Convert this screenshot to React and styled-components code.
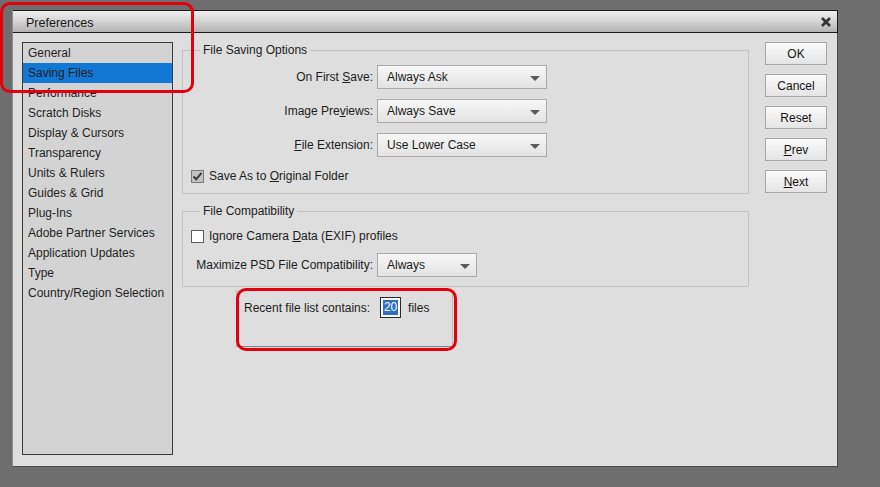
import React from 'react';
import styled, { createGlobalStyle } from 'styled-components';

const GlobalStyle = createGlobalStyle`
  html, body {
    margin: 0;
    padding: 0;
    background: #6e6e6e;
  }
  body {
    font-family: "Liberation Sans", Arial, sans-serif;
    font-size: 12px;
    color: #1c1c1c;
  }
  * { box-sizing: border-box; }
`;

const Screen = styled.div`
  position: relative;
  width: 880px;
  height: 487px;
  padding: 10px 0 0 12px;
  overflow: hidden;
`;

const Dialog = styled.div`
  width: 826px;
  height: 457px;
  display: flex;
  flex-direction: column;
  background: #dedede;
  border-left: 1px solid #8c8c8c;
  border-right: 1px solid #4a4a4a;
  border-bottom: 1px solid #4a4a4a;
`;

const TitleBar = styled.div`
  height: 23px;
  display: flex;
  align-items: center;
  justify-content: space-between;
  padding: 2px 5px 0 13px;
  border-top: 1px solid #1a1a1a;
  border-bottom: 1px solid #1a1a1a;
  margin-right: -1px;
  border-right: 1px solid #1a1a1a;
  background: linear-gradient(#eeeeee, #d6d6d6 45%, #b2b2b2);
  font-size: 12.5px;
  color: #161616;
`;

const CloseButton = styled.span`
  display: flex;
  width: 12px;
  height: 12px;
  margin-top: -2px;
  color: #333;
`;

const Body = styled.div`
  flex: 1;
  display: flex;
  padding: 10px 10px 9px 9px;
`;

const Sidebar = styled.ul`
  list-style: none;
  margin: -1px 0 0 0;
  padding: 0;
  width: 151px;
  height: 413px;
  border: 1px solid #3a3a3a;
  background: #d3d3d3;
`;

const SidebarItem = styled.li`
  height: 20px;
  line-height: 21px;
  padding-left: 5px;
  white-space: nowrap;
  color: #1f1f1f;
  background: ${(p) => (p.$active ? '#1378d4' : 'transparent')};
`;

const Content = styled.div`
  width: 567px;
  margin-left: 9px;
  display: flex;
  flex-direction: column;
`;

const Group = styled.fieldset`
  margin: ${(p) => p.$top || 0}px 0 0 0;
  padding: 0;
  border: 1px solid #c2c2c2;
  min-width: 0;
`;

const Legend = styled.legend`
  margin-left: 17px;
  padding: 0 3px;
  line-height: 14px;
  color: #1c1c1c;
`;

const GroupBody = styled.div`
  display: flex;
  flex-direction: column;
  gap: 10px;
  padding: ${(p) => p.$pad};
`;

const FieldRow = styled.div`
  display: flex;
  align-items: center;
  height: 24px;
`;

const FieldLabel = styled.label`
  width: 194px;
  text-align: right;
  padding-right: 4px;
  white-space: nowrap;
`;

const Select = styled.div`
  position: relative;
  width: ${(p) => p.$width}px;
  height: 24px;
  display: flex;
  align-items: center;
  padding-left: 9px;
  border: 1px solid #a9a9a9;
  background: linear-gradient(#f7f7f7, #e3e3e3);
  color: #1a1a1a;

  &::after {
    content: '';
    position: absolute;
    right: 6px;
    top: 10px;
    border-left: 5px solid transparent;
    border-right: 5px solid transparent;
    border-top: 5px solid #5a5a5a;
  }
`;

const CheckRow = styled.label`
  display: flex;
  align-items: center;
  height: 14px;
  gap: 5px;
  padding-left: 8px;
  margin-top: ${(p) => p.$top || 0}px;
`;

const Box = styled.span`
  display: flex;
  width: 13px;
  height: 13px;
  border: 1px solid ${(p) => (p.$checked ? '#7a7a7a' : '#5c5c5c')};
  background: ${(p) => (p.$checked ? '#c3c3c3' : '#ffffff')};
  color: #3a3a3a;
`;

const RecentBox = styled.div`
  margin: 3px 0 0 54px;
  width: 217px;
  height: 57px;
  padding: 6px 7px;
  border: 1px solid #bdbdbd;
  border-bottom-color: #858585;
`;

const RecentRow = styled.div`
  display: flex;
  align-items: center;
  height: 21px;
`;

const CountInput = styled.span`
  width: 21px;
  height: 21px;
  margin: 0 7px 0 10px;
  padding: 2px;
  border: 1px solid #2a2a2a;
  background: #fff;
  display: flex;
`;

const Selected = styled.span`
  flex: 1;
  background: #2c6fc5;
  color: #fff;
  line-height: 15px;
  text-align: center;
`;

const Buttons = styled.div`
  width: 62px;
  margin: -1px 0 0 16px;
  display: flex;
  flex-direction: column;
  gap: 9px;
`;

const Button = styled.button`
  height: 23px;
  padding: 0;
  border: 1px solid #a6a6a6;
  border-radius: 0;
  background: linear-gradient(#fbfbfb, #e4e4e4);
  font-family: inherit;
  font-size: 12px;
  color: #141414;
`;

const Callout = styled.div`
  position: absolute;
  left: ${(p) => p.$x}px;
  top: ${(p) => p.$y}px;
  width: ${(p) => p.$w}px;
  height: ${(p) => p.$h}px;
  border: 3px solid #e3000d;
  border-radius: 10px;
  pointer-events: none;
`;

const sections = [
  'General',
  'Saving Files',
  'Performance',
  'Scratch Disks',
  'Display & Cursors',
  'Transparency',
  'Units & Rulers',
  'Guides & Grid',
  'Plug-Ins',
  'Adobe Partner Services',
  'Application Updates',
  'Type',
  'Country/Region Selection',
];

function Check({ checked }) {
  return (
    <Box $checked={checked}>
      {checked && (
        <svg width="11" height="11" viewBox="0 0 11 11">
          <path d="M1.5 5.5 L4.2 8.3 L9.5 1.8" fill="none" stroke="currentColor" strokeWidth="2" />
        </svg>
      )}
    </Box>
  );
}

export default function App() {
  return (
    <>
      <GlobalStyle />
      <Screen>
        <Dialog>
          <TitleBar>
            <span>Preferences</span>
            <CloseButton>
              <svg width="12" height="12" viewBox="0 0 12 12">
                <path d="M2 2 L10 10 M10 2 L2 10" stroke="currentColor" strokeWidth="2.6" />
              </svg>
            </CloseButton>
          </TitleBar>
          <Body>
            <Sidebar>
              {sections.map((name) => (
                <SidebarItem key={name} $active={name === 'Saving Files'}>
                  {name}
                </SidebarItem>
              ))}
            </Sidebar>

            <Content>
              <Group>
                <Legend>File Saving Options</Legend>
                <GroupBody $pad="8px 0 10px 0">
                  <FieldRow>
                    <FieldLabel>On First <u>S</u>ave:</FieldLabel>
                    <Select $width={170}>Always Ask</Select>
                  </FieldRow>
                  <FieldRow>
                    <FieldLabel>Image Pre<u>v</u>iews:</FieldLabel>
                    <Select $width={170}>Always Save</Select>
                  </FieldRow>
                  <FieldRow>
                    <FieldLabel><u>F</u>ile Extension:</FieldLabel>
                    <Select $width={170}>Use Lower Case</Select>
                  </FieldRow>
                  <CheckRow $top={2}>
                    <Check checked />
                    <span>Save As to <u>O</u>riginal Folder</span>
                  </CheckRow>
                </GroupBody>
              </Group>

              <Group $top={10}>
                <Legend>File Compatibility</Legend>
                <GroupBody $pad="11px 0 9px 0">
                  <CheckRow>
                    <Check />
                    <span>Ignore Camera <u>D</u>ata (EXIF) profiles</span>
                  </CheckRow>
                  <FieldRow>
                    <FieldLabel>Maximize PSD File Compatibility:</FieldLabel>
                    <Select $width={100}>Always</Select>
                  </FieldRow>
                </GroupBody>
              </Group>

              <RecentBox>
                <RecentRow>
                  <span>Recent file list contains:</span>
                  <CountInput>
                    <Selected>20</Selected>
                  </CountInput>
                  <span>files</span>
                </RecentRow>
              </RecentBox>
            </Content>

            <Buttons>
              <Button>OK</Button>
              <Button>Cancel</Button>
              <Button>Reset</Button>
              <Button><u>P</u>rev</Button>
              <Button><u>N</u>ext</Button>
            </Buttons>
          </Body>
        </Dialog>

        <Callout $x={0} $y={2} $w={194} $h={91} />
        <Callout $x={236} $y={288} $w={221} $h={63} />
      </Screen>
    </>
  );
}
